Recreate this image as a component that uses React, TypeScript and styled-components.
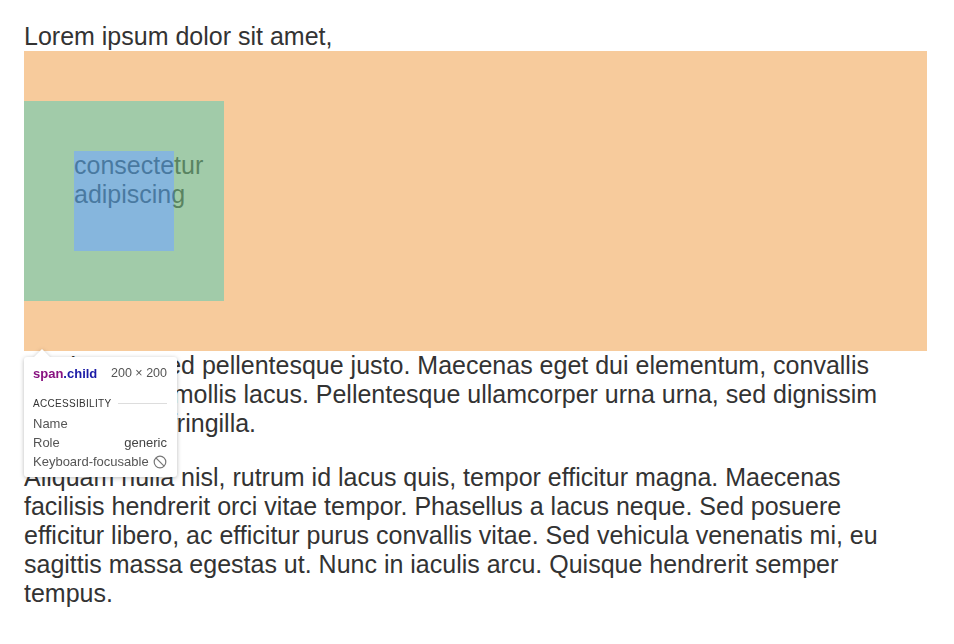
import React, { FC } from 'react'
import styled, { createGlobalStyle } from 'styled-components'

const GlobalStyle = createGlobalStyle`
    html, body {
        margin: 0;
        padding: 0;
        background: #fff;
    }
`

const Page = styled.div`
    padding: 22px 27px 0 24px;
    font-family: 'Liberation Sans', Arial, sans-serif;
    font-size: 25px;
    line-height: 29px;
    color: #333;
`

const Paragraph = styled.p<{ $anchor?: boolean }>`
    position: ${(p) => (p.$anchor ? 'relative' : 'static')};
    margin: 0 0 25px;
`

const Child = styled.span`
    display: block;
    width: 100px;
    height: 100px;
    padding: 50px;
    margin: 50px 0;
`

// devtools box model highlight
const Highlight = styled.div`
    position: absolute;
    top: 29px;
    left: 0;
    right: 0;
    display: flex;
    pointer-events: none;
`

const MarginBox = styled.div`
    border-top: 50px solid rgba(243, 176, 104, 0.66);
    border-bottom: 50px solid rgba(243, 176, 104, 0.66);
`

const MarginFill = styled.div`
    flex: 1;
    background: rgba(243, 176, 104, 0.66);
`

const PaddingBox = styled.div`
    border: 50px solid rgba(110, 175, 123, 0.65);
`

const ContentBox = styled.div`
    width: 100px;
    height: 100px;
    background: rgba(82, 151, 206, 0.7);
`

const Tooltip = styled.div`
    position: absolute;
    z-index: 2;
    top: 335px;
    left: 0;
    width: 153px;
    box-sizing: border-box;
    padding: 8px 10px 6px 9px;
    background: #fff;
    border-radius: 3px;
    filter: drop-shadow(0 1px 2px rgba(0, 0, 0, 0.28));
    font-family: 'Liberation Sans', Arial, sans-serif;
    line-height: normal;
    color: #555;

    &::before {
        content: '';
        position: absolute;
        top: -8px;
        left: 10px;
        border-left: 8px solid transparent;
        border-right: 8px solid transparent;
        border-bottom: 8px solid #fff;
    }
`

const Header = styled.div`
    display: flex;
    justify-content: space-between;
    align-items: center;
    height: 16px;
`

const Selector = styled.span`
    font-size: 13px;
    font-weight: bold;
    color: #1a1aa6;
`

const Tag = styled.span`
    color: #881280;
`

const Dims = styled.span`
    font-size: 12.5px;
    color: #555;
`

const SectionTitle = styled.div`
    display: flex;
    align-items: center;
    gap: 7px;
    margin-top: 15px;
    height: 14px;
    font-size: 10px;
    letter-spacing: 0.3px;
    color: #333;
    text-transform: uppercase;

    &::after {
        content: '';
        flex: 1;
        height: 1px;
        background: #ddd;
    }
`

const Rows = styled.div`
    margin-top: 4px;
`

const Row = styled.div`
    display: flex;
    justify-content: space-between;
    align-items: center;
    height: 19px;
    font-size: 13px;
    color: #555;
    white-space: nowrap;
`

const Value = styled.span`
    display: flex;
    align-items: center;
    color: #444;
`

const NotAllowed: FC = () => (
    <svg width="14" height="14" viewBox="0 0 14 14" fill="none" stroke="#777" strokeWidth="1.2">
        <circle cx="7" cy="7" r="5.8" />
        <line x1="2.9" y1="2.9" x2="11.1" y2="11.1" />
    </svg>
)

const InspectTooltip: FC = () => (
    <Tooltip>
        <Header>
            <Selector>
                <Tag>span</Tag>.child
            </Selector>
            <Dims>200 × 200</Dims>
        </Header>
        <SectionTitle>Accessibility</SectionTitle>
        <Rows>
            <Row>
                <span>Name</span>
                <Value />
            </Row>
            <Row>
                <span>Role</span>
                <Value>generic</Value>
            </Row>
            <Row>
                <span>Keyboard-focusable</span>
                <Value>
                    <NotAllowed />
                </Value>
            </Row>
        </Rows>
    </Tooltip>
)

const App: FC = () => {
    return (
        <>
            <GlobalStyle />
            <Page>
                <Paragraph $anchor>
                    Lorem ipsum dolor sit amet, <Child className="child">consectetur adipiscing</Child> elit.
                    Integer sed pellentesque justo. Maecenas eget dui elementum, convallis ultrices ante,
                    mollis lacus. Pellentesque ullamcorper urna urna, sed dignissim sagittis nunc fringilla.
                    <Highlight>
                        <MarginBox>
                            <PaddingBox>
                                <ContentBox />
                            </PaddingBox>
                        </MarginBox>
                        <MarginFill />
                    </Highlight>
                    <InspectTooltip />
                </Paragraph>
                <Paragraph>
                    Aliquam nulla nisl, rutrum id lacus quis, tempor efficitur magna. Maecenas facilisis
                    hendrerit orci vitae tempor. Phasellus a lacus neque. Sed posuere efficitur libero, ac
                    efficitur purus convallis vitae. Sed vehicula venenatis mi, eu sagittis massa egestas ut.
                    Nunc in iaculis arcu. Quisque hendrerit semper tempus.
                </Paragraph>
            </Page>
        </>
    )
}

export default App
